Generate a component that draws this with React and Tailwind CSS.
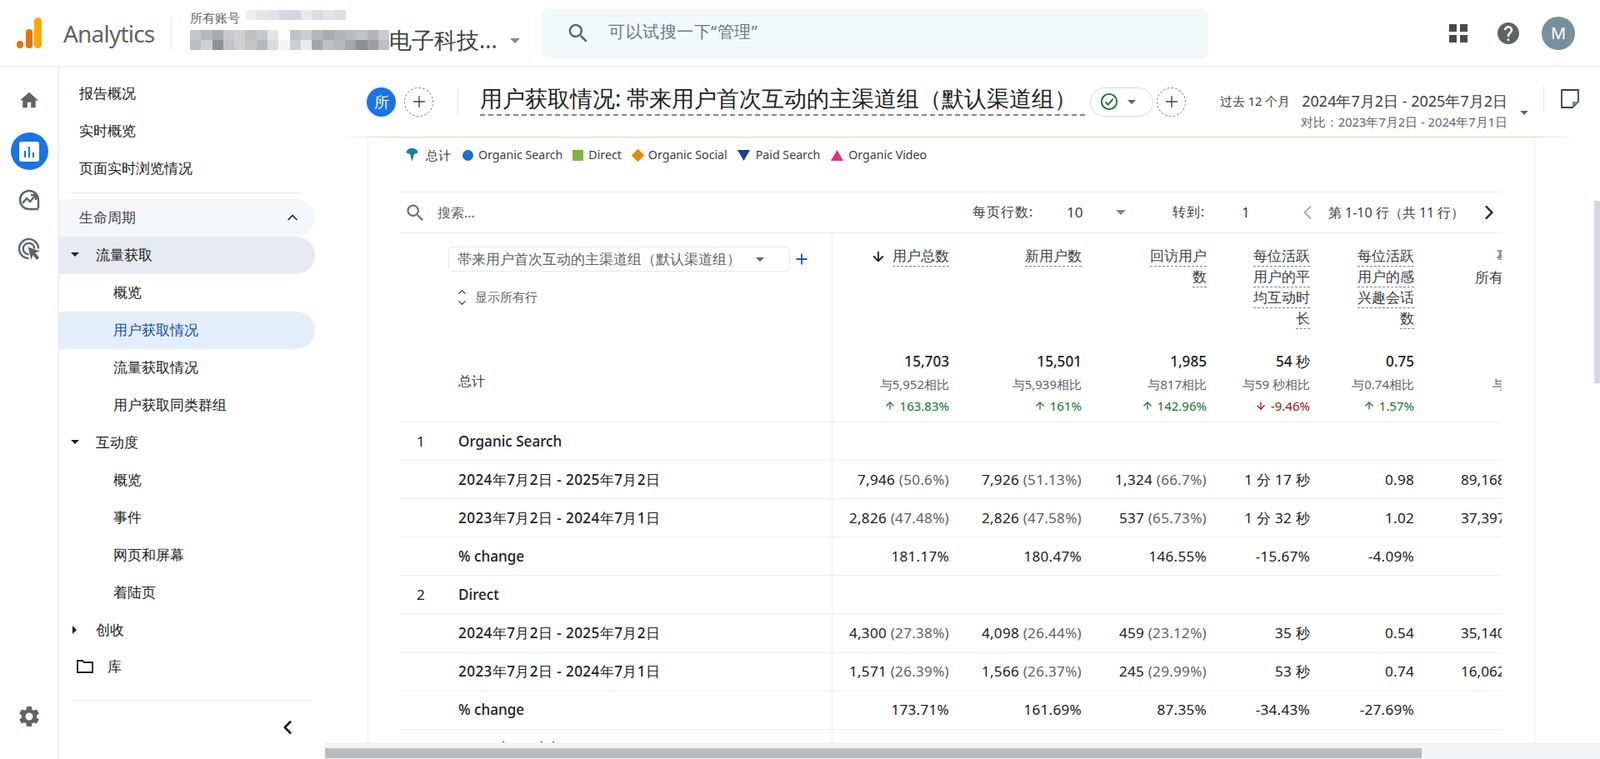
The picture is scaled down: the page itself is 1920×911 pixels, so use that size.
import React from "react";
import { ChevronLeft, ChevronRight, ChevronUp, ChevronDown, ArrowDown, ArrowUp, Plus } from "lucide-react";

const SearchI = ({ className }) => (
  <svg viewBox="0 0 24 24" className={className} fill="currentColor"><path d="M15.5 14h-.79l-.28-.27C15.41 12.59 16 11.11 16 9.5 16 5.91 13.09 3 9.5 3S3 5.91 3 9.5 5.91 16 9.5 16c1.61 0 3.09-.59 4.23-1.57l.27.28v.79l5 4.99L20.49 19l-4.99-5zm-6 0C7.01 14 5 11.99 5 9.5S7.01 5 9.5 5 14 7.01 14 9.5 11.99 14 9.5 14z" /></svg>
);
const Caret = ({ className = "" }) => (
  <span className={"w-0 h-0 border-x-[6px] border-x-transparent border-t-[6px] " + className} />
);

const mosaicA = ["#eceef1","#e4e6ea","#dfe2e6","#d4d8de","#d2d6dc","#e6e8eb","#d9dde2","#e2e4e8","#dcdfe3"];
const mosaicB = ["#c4c6c9","#b6b8bb","#a9abae","#c9cacc","#cfd0d1","#bfc1c3","#c6c8ca","#e3e4e6","#fdfdfd","#c1c5ca","#c9ced3","#b3b6ba","#a9acaf","#b1b4b7","#b8babd","#c0c2c5","#b4b6b9","#c8cacd"];
const mosaicC = ["#bcbec1","#cfd1d3","#8f9194","#c1c3c6","#cdd0d2","#c3c5c8","#b5b7ba","#d8dadc","#f4f4f5","#ccd0d4","#e8eaec","#a3a6a9","#bdbfc2","#b7b9bc","#a4a6a9","#8d8f92","#9da0a3","#bcbec1"];
const Mosaic = ({ colors }) => (
  <div className="flex">{colors.map((c, i) => <div key={i} className="w-[13.3px] h-[12px]" style={{ backgroundColor: c }} />)}</div>
);

function Header() {
  return (
    <div className="h-[80px] flex items-center border-b border-[#e8eaed] shrink-0">
      <div className="ml-[20px] flex items-end gap-[2px] h-[37px] w-[30px] shrink-0">
        <span className="w-[8px] h-[9px] rounded-full bg-[#e37400]" />
        <span className="ml-[1px] w-[9px] h-[23px] rounded-full bg-[#e8710a]" />
        <span className="w-[9px] h-[37px] rounded-full bg-[#f9ab00]" />
      </div>
      <span className="ml-[26px] w-[129px] text-[28px] text-[#5f6368] font-['Open_Sans',sans-serif] tracking-[-0.8px]">Analytics</span>
      <div className="w-px h-[40px] bg-[#e8eaed]" />
      <div className="ml-[22px] w-[422px] h-[60px] flex flex-col">
        <div className="flex items-center h-[24px]">
          <span className="text-[15px] text-[#5f6368] w-[67px]">所有账号</span>
          <div className="-mt-[8px]"><Mosaic colors={mosaicA} /></div>
        </div>
        <div className="flex items-center h-[36px] -mt-[4px]">
          <div className="flex flex-col w-[239px] overflow-hidden shrink-0">
            <Mosaic colors={mosaicB} />
            <Mosaic colors={mosaicC} />
          </div>
          <span className="text-[27px] text-[#3c4043] leading-[36px]">电子科技...</span>
          <Caret className="ml-[15px] mt-[3px] border-t-[#80868b]" />
        </div>
      </div>
      <div className="w-[800px] h-[60px] rounded-[8px] bg-[#f2f9fb] flex items-center pl-[29px]">
        <SearchI className="w-[30px] h-[30px] text-[#5f6368]" />
        <span className="ml-[21px] pb-[3px] text-[20px] tracking-[0.5px] text-[#70757a]">可以试搜一下“管理”</span>
      </div>
      <svg viewBox="0 0 22 24" className="ml-[289px] w-[22px] h-[24px] text-[#4a4a4d]" fill="currentColor">
        <rect x="0" y="1" width="9" height="9" /><rect x="13" y="1" width="9" height="9" /><rect x="0" y="14" width="9" height="9" /><rect x="13" y="14" width="9" height="9" />
      </svg>
      <svg viewBox="2 2 20 20" className="ml-[36px] w-[26px] h-[26px] text-[#5f6368]" fill="currentColor"><path d="M12 2C6.48 2 2 6.48 2 12s4.48 10 10 10 10-4.48 10-10S17.52 2 12 2zm1 17h-2v-2h2v2zm2.07-7.75l-.9.92C13.45 12.9 13 13.5 13 15h-2v-.5c0-1.1.45-2.1 1.17-2.83l1.24-1.26c.37-.36.59-.86.59-1.41 0-1.1-.9-2-2-2s-2 .9-2 2H8c0-2.21 1.79-4 4-4s4 1.79 4 4c0 .88-.36 1.68-.93 2.25z" /></svg>
      <div className="ml-[27px] w-[40px] h-[40px] rounded-full bg-[#78909c] text-white flex items-center justify-center text-[20px]">M</div>
    </div>
  );
}

function Rail() {
  return (
    <div className="w-[71px] shrink-0 border-r border-[#e3e5e8] flex flex-col items-center relative">
      <svg viewBox="2 3 20 17" className="mt-[29px] w-[22px] h-[22px] text-[#5f6368]" fill="currentColor"><path d="M10 20v-6h4v6h5v-8h3L12 3 2 12h3v8z" /></svg>
      <div className="mt-[28px] w-[45px] h-[45px] rounded-full bg-[#1a73e8] flex items-center justify-center">
        <svg viewBox="0 0 24 24" className="w-[24px] h-[24px]">
          <rect x="0" y="0" width="24" height="24" rx="3" fill="#fff" />
          <rect x="6" y="11" width="2" height="8" fill="#1a73e8" /><rect x="11" y="6" width="2" height="13" fill="#1a73e8" /><rect x="16" y="13" width="2" height="6" fill="#1a73e8" />
        </svg>
      </div>
      <svg viewBox="0 0 26 26" className="mt-[23px] w-[26px] h-[26px] text-[#5f6368]" fill="none" stroke="currentColor" strokeWidth="2.4">
        <path d="M24 23V13A11 11 0 1 0 13 24h11" />
        <path d="M5 17l5-6 4 4 6-7" /><path d="M15 7h6v6" />
      </svg>
      <svg viewBox="0 0 28 28" className="mt-[33px] w-[27px] h-[27px] text-[#5f6368]" fill="none" stroke="currentColor" strokeWidth="2.4">
        <path d="M13 25A12 12 0 1 1 25 13" /><path d="M13 20a7 7 0 1 1 7-7" />
        <path d="M12 11l15 5-6 2 5 6-3 3-5-6-2 6z" fill="currentColor" stroke="none" />
      </svg>
      <svg viewBox="0 0 24 24" className="absolute top-[765px] left-[20px] w-[30px] h-[30px] text-[#5f6368]" fill="currentColor"><path d="M19.14,12.94c0.04-0.3,0.06-0.61,0.06-0.94c0-0.32-0.02-0.64-0.07-0.94l2.03-1.58c0.18-0.14,0.23-0.41,0.12-0.61 l-1.92-3.32c-0.12-0.22-0.37-0.29-0.59-0.22l-2.39,0.96c-0.5-0.38-1.03-0.7-1.62-0.94L14.4,2.81c-0.04-0.24-0.24-0.41-0.48-0.41 h-3.84c-0.24,0-0.43,0.17-0.47,0.41L9.25,5.35C8.66,5.59,8.12,5.92,7.63,6.29L5.24,5.33c-0.22-0.08-0.47,0-0.59,0.22L2.74,8.87 C2.62,9.08,2.66,9.34,2.86,9.48l2.03,1.58C4.84,11.36,4.8,11.69,4.8,12s0.02,0.64,0.07,0.94l-2.03,1.58 c-0.18,0.14-0.23,0.41-0.12,0.61l1.92,3.32c0.12,0.22,0.37,0.29,0.59,0.22l2.39-0.96c0.5,0.38,1.03,0.7,1.62,0.94l0.36,2.54 c0.05,0.24,0.24,0.41,0.48,0.41h3.84c0.24,0,0.44-0.17,0.47-0.41l0.36-2.54c0.59-0.24,1.13-0.56,1.62-0.94l2.39,0.96 c0.22,0.08,0.47,0,0.59-0.22l1.92-3.32c0.12-0.22,0.07-0.47-0.12-0.61L19.14,12.94z M12,15.6c-1.98,0-3.6-1.62-3.6-3.6 s1.62-3.6,3.6-3.6s3.6,1.62,3.6,3.6S13.98,15.6,12,15.6z" /></svg>
    </div>
  );
}

const Item = ({ children, pl = "pl-[24px]", cls = "" }) => (
  <div className={"h-[45px] flex items-center pb-[2px] text-[17.14px] text-[#202124] " + pl + " " + cls}>{children}</div>
);
const Group = ({ children, open = true, cls = "" }) => (
  <div className={"h-[45px] flex items-center pl-[14px] pb-[2px] text-[17.14px] text-[#202124] " + cls}>
    {open ? <Caret className="border-t-[#202124] !border-x-[5px] !border-t-[5px]" /> : <span className="w-0 h-0 ml-[2px] border-y-[5px] border-y-transparent border-l-[5px] border-l-[#202124]" />}
    <span className={open ? "ml-[20px]" : "ml-[23px]"}>{children}</span>
  </div>
);

function Sidebar() {
  return (
    <div className="w-[307px] shrink-0 pt-[10px] flex flex-col">
      <Item>报告概况</Item>
      <Item>实时概览</Item>
      <Item>页面实时浏览情况</Item>
      <div className="mt-[6px] ml-[14px] mr-[16px] border-t border-[#e8eaed]" />
      <div className="mt-[7px] h-[45px] flex items-center pb-[2px] pl-[24px] pr-[17px] justify-between text-[17.14px] text-[#3c4043] bg-[#f4f6fa] rounded-r-full">
        生命周期<ChevronUp size={20} className="text-[#202124]" />
      </div>
      <Group cls="bg-[#e7eaf0] rounded-r-full">流量获取</Group>
      <Item pl="pl-[65px]">概览</Item>
      <Item pl="pl-[65px]" cls="!text-[#174ea6] bg-[#e3eefb] rounded-r-full">用户获取情况</Item>
      <Item pl="pl-[65px]">流量获取情况</Item>
      <Item pl="pl-[65px]">用户获取同类群组</Item>
      <Group>互动度</Group>
      <Item pl="pl-[65px]">概览</Item>
      <Item pl="pl-[65px]">事件</Item>
      <Item pl="pl-[65px]">网页和屏幕</Item>
      <Item pl="pl-[65px]">着陆页</Item>
      <Group open={false}>创收</Group>
      <div className="h-[41px] flex items-center pl-[21px] text-[17.14px] text-[#202124]">
        <svg viewBox="0 0 20 17" className="w-[20px] h-[17px]" fill="none" stroke="#202124" strokeWidth="1.8"><path d="M1 16V2h6l2 2h10v12z" /></svg>
        <span className="ml-[17px]">库</span>
      </div>
      <div className="mt-[20px] ml-[15px] mr-[3px] border-t border-[#e8eaed]" />
      <div className="h-[66px] flex justify-end items-center pr-[20px]"><ChevronLeft size={26} strokeWidth={2.6} className="text-[#202124] -mt-[3px]" /></div>
    </div>
  );
}

function TitleBar() {
  return (
    <div className="shrink-0">
      <div className="h-[84px] pl-[62px] flex items-center">
        <div className="w-[35px] h-[35px] shrink-0 rounded-full bg-[#1a73e8] text-white flex items-center justify-center text-[18px]">所</div>
        <div className="ml-[10px] w-[35px] h-[35px] shrink-0 rounded-full border border-dashed border-[#80868b] flex items-center justify-center"><Plus size={22} strokeWidth={1.5} className="text-[#3c4043]" /></div>
        <div className="ml-[29px] w-px h-[30px] shrink-0 bg-[#e8eaed]" />
        <div className="ml-[26px] mb-[2px] w-[726px] shrink-0 text-[27px] leading-[28px] pb-[5px] text-[#202124] whitespace-nowrap border-b-2 border-dashed border-[#80868b]">用户获取情况: 帯来用户首次互动的主渠道组（默认渠道组）</div>
        <div className="ml-[6px] w-[76px] h-[35px] shrink-0 rounded-full border border-[#dadce0] flex items-center pl-[11px]">
          <svg viewBox="0 0 24 24" className="w-[22px] h-[22px]" fill="none" stroke="#137333" strokeWidth="2"><circle cx="12" cy="12" r="10" /><path d="M7 12.5l3.5 3.5L17 8.500" /></svg>
          <Caret className="ml-[11px] border-t-[#5f6368] !border-x-[5px] !border-t-[5px]" />
        </div>
        <div className="ml-[4px] w-[35px] h-[35px] shrink-0 rounded-full border border-dashed border-[#80868b] flex items-center justify-center"><Plus size={22} strokeWidth={1.5} className="text-[#3c4043]" /></div>
        <div className="ml-[42px] mt-[22px] w-[344px] shrink-0 flex flex-col items-end whitespace-nowrap">
          <div className="flex items-center h-[26px]">
            <span className="text-[14.7px] text-[#3c4043]">过去 12 个月</span>
            <span className="ml-[14px] text-[18px] text-[#3c4043]">2024年7月2日 - 2025年7月2日</span>
          </div>
          <div className="text-[14.7px] h-[24px] leading-[24px] text-[#5f6368]">对比：2023年7月2日 - 2024年7月1日</div>
        </div>
        <Caret className="ml-[15px] mt-[26px] shrink-0 border-t-[#5f6368] !border-x-[5px] !border-t-[5px]" />
        <div className="ml-[18px] w-px h-[30px] shrink-0 bg-[#e8eaed] -mt-[6px]" />
        <svg viewBox="0 0 22 23" className="ml-[20px] w-[22px] h-[23px] shrink-0 -mt-[8px]" fill="none" stroke="#3c4043" strokeWidth="1.8"><path d="M1 1h20v14l-7 7H1z" /><path d="M21 15h-7v7z" fill="#80868b" stroke="none" /></svg>
      </div>
      <div className="h-px mr-[30px] ml-[30px] bg-[linear-gradient(to_right,transparent,#d4d4ce_4%,#d4d4ce_97%,transparent)]" />
    </div>
  );
}

const LegendText = ({ children, cls = "" }) => <span className={"text-[14.2px] text-[#3c4043] " + cls}>{children}</span>;

function Legend() {
  return (
    <div className="h-[65px] pt-[8px] pl-[45px] flex items-start">
      <div className="flex items-center h-[26px]">
        <svg viewBox="0 0 14 16" className="w-[15px] h-[16px]"><path d="M0 5a7 5 0 0 1 14 0c0 1-3 1-4.500 2L7 16 4.500 7C3 6 0 6 0 5z" fill="#12829e" /></svg>
        <span className="ml-[9px] text-[14.7px] text-[#3c4043]">总计</span>
        <span className="ml-[14px] w-[13px] h-[13px] rounded-full bg-[#1a6ed8]" />
        <LegendText cls="ml-[6px]">Organic Search</LegendText>
        <span className="ml-[12px] w-[13px] h-[13px] bg-[#7cb342]" />
        <LegendText cls="ml-[6px]">Direct</LegendText>
        <span className="ml-[14px] w-[11px] h-[11px] rotate-45 bg-[#e58a00]" />
        <LegendText cls="ml-[7px]">Organic Social</LegendText>
        <svg viewBox="0 0 15 13" className="ml-[12px] w-[15px] h-[13px]"><path d="M0 0h15L7.500 13z" fill="#1f3a93" /></svg>
        <LegendText cls="ml-[7px]">Paid Search</LegendText>
        <svg viewBox="0 0 15 13" className="ml-[13px] w-[15px] h-[13px]"><path d="M0 13h15L7.500 0z" fill="#e52b8c" /></svg>
        <LegendText cls="ml-[6px]">Organic Video</LegendText>
      </div>
    </div>
  );
}

function SearchRow() {
  return (
    <div className="h-[50px] flex items-center border-y border-[#eeeeee] text-[#5f6368]">
      <SearchI className="ml-[5px] w-[27px] h-[27px] text-[#70757a]" />
      <span className="ml-[13px] text-[16px]">搜索...</span>
      <span className="ml-[597px] text-[15.5px] tracking-[1px] text-[#3c4043] w-[113px]">每页行数:</span>
      <span className="text-[17.14px] text-[#3c4043] w-[59px]">10</span>
      <Caret className="border-t-[#80868b]" />
      <span className="ml-[56px] text-[15.5px] tracking-[1px] text-[#3c4043] w-[83px]">转到:</span>
      <span className="text-[17.14px] text-[#3c4043] w-[65px]">1</span>
      <ChevronLeft size={28} strokeWidth={1.5} className="text-[#9aa0a6]" />
      <span className="ml-[11px] text-[16px] text-[#3c4043] w-[179px] whitespace-nowrap">第 1-10 行（共 11 行）</span>
      <ChevronRight size={28} strokeWidth={2} className="text-[#202124]" />
    </div>
  );
}

const W = ["w-[140px]", "w-[159px]", "w-[150px]", "w-[124px]", "w-[125px]"];
const HeaderCol = ({ i, lines, arrow }) => (
  <div className={W[i] + " shrink-0 flex flex-col items-end"}>
    {lines.map((l, k) => (
      <div key={k} className="flex items-center h-[25px]">
        {arrow && <ArrowDown size={18} strokeWidth={2.4} className="mr-[8px] text-[#202124]" />}
        <span className="h-[25px] leading-[24px] text-[17.3px] text-[#3c4043] border-b border-dashed border-[#80868b]">{l}</span>
      </div>
    ))}
  </div>
);
const TotalCol = ({ i, a, b, c, up = true }) => (
  <div className={W[i] + " shrink-0 flex flex-col items-end"}>
    <div className="h-[26px] leading-[26px] text-[17.14px] font-medium text-[#202124]">{a}</div>
    <div className="h-[28px] leading-[28px] text-[15px] text-[#5f6368]">{b}</div>
    <div className={"h-[24px] text-[15px] flex items-center gap-[5px] " + (up ? "text-[#137333]" : "text-[#a50e0e]")}>
      {up ? <ArrowUp size={14} strokeWidth={2.2} /> : <ArrowDown size={14} strokeWidth={2.2} />}{c}
    </div>
  </div>
);

function TableHead() {
  return (
    <>
      <div className="flex h-[141px]">
        <div className="w-[519px] shrink-0 border-r border-[#eeeeee] pl-[58px] pt-[16px]">
          <div className="flex items-center">
            <div className="w-[410px] h-[30px] border border-[#e8e8e8] rounded-[5px] flex items-center pl-[10px] text-[17.3px] text-[#5f6368] whitespace-nowrap">
              帯来用户首次互动的主渠道组（默认渠道组）
              <Caret className="ml-[18px] border-t-[#5f6368] !border-x-[5px] !border-t-[5px]" />
            </div>
            <Plus size={20} strokeWidth={2.2} className="ml-[4px] text-[#185abc]" />
          </div>
          <div className="mt-[17px] ml-[9px] flex items-center text-[14.5px] text-[#5f6368]">
            <span className="flex flex-col w-[14px] mr-[9px] text-[#3c4043]"><ChevronUp size={15} strokeWidth={2} className="-mb-[2px]" /><ChevronDown size={15} strokeWidth={2} /></span>
            显示所有行
          </div>
        </div>
        <div className="flex pt-[15px] overflow-hidden">
          <HeaderCol i={0} lines={["用户总数"]} arrow />
          <HeaderCol i={1} lines={["新用户数"]} />
          <HeaderCol i={2} lines={["回访用户", "数"]} />
          <HeaderCol i={3} lines={["每位活跃", "用户的平", "均互动时", "长"]} />
          <HeaderCol i={4} lines={["每位活跃", "用户的感", "兴趣会话", "数"]} />
          <div className="w-[106px] text-[17.14px] text-[#3c4043] whitespace-nowrap overflow-hidden">
            <div className="h-[25px] leading-[24px] pl-[99px]">事件数</div>
            <div className="leading-[25px] pl-[73px]">所有事件</div>
          </div>
        </div>
      </div>
      <div className="flex h-[86px] border-b border-[#eeeeee]">
        <div className="w-[519px] shrink-0 border-r border-[#eeeeee] pl-[70px] flex items-center pb-[12px] text-[15.5px] text-[#3c4043]">总计</div>
        <TotalCol i={0} a="15,703" b="与5,952相比" c="163.83%" />
        <TotalCol i={1} a="15,501" b="与5,939相比" c="161%" />
        <TotalCol i={2} a="1,985" b="与817相比" c="142.96%" />
        <TotalCol i={3} a="54 秒" b="与59 秒相比" c="-9.46%" up={false} />
        <TotalCol i={4} a="0.75" b="与0.74相比" c="1.57%" />
        <div className="w-[106px] overflow-hidden whitespace-nowrap pl-[94px] pt-[26px] leading-[28px] text-[15px] text-[#5f6368]">与238,462相比</div>
      </div>
    </>
  );
}

const Cell = ({ i, v }) => {
  const [n, p] = v.split("|");
  return (
    <div className={W[i] + " shrink-0 text-right whitespace-nowrap tracking-[0.25px]"}>
      {n}{p && <span className="text-[#5f6368]"> {p}</span>}
    </div>
  );
};
const Row = ({ idx, label, vals = [], last, date }) => (
  <div className="flex h-[46.1px] border-b border-[#eeeeee] items-center text-[17.14px] text-[#202124]">
    <div className="w-[519px] shrink-0 self-stretch border-r border-[#eeeeee] flex items-center">
      <span className="w-[70px] pl-[20px]">{idx}</span>
      <span className={"font-medium " + (date ? "tracking-[0.4px]" : "")}>{label}</span>
    </div>
    {vals.map((v, i) => <Cell key={i} i={i} v={v} />)}
    {last && <div className="w-[106px] overflow-hidden whitespace-nowrap pl-[56px]">{last}</div>}
  </div>
);

function Table() {
  return (
    <div className="ml-[38px] w-[1322px]">
      <SearchRow />
      <TableHead />
      <Row idx="1" label="Organic Search" />
      <Row label="2024年7月2日 - 2025年7月2日" date vals={["7,946|(50.6%)", "7,926|(51.13%)", "1,324|(66.7%)", "1 分 17 秒", "0.98"]} last="89,168" />
      <Row label="2023年7月2日 - 2024年7月1日" date vals={["2,826|(47.48%)", "2,826|(47.58%)", "537|(65.73%)", "1 分 32 秒", "1.02"]} last="37,397" />
      <Row label="% change" vals={["181.17%", "180.47%", "146.55%", "-15.67%", "-4.09%"]} />
      <Row idx="2" label="Direct" />
      <Row label="2024年7月2日 - 2025年7月2日" date vals={["4,300|(27.38%)", "4,098|(26.44%)", "459|(23.12%)", "35 秒", "0.54"]} last="35,140" />
      <Row label="2023年7月2日 - 2024年7月1日" date vals={["1,571|(26.39%)", "1,566|(26.37%)", "245|(29.99%)", "53 秒", "0.74"]} last="16,062" />
      <Row label="% change" vals={["173.71%", "161.69%", "87.35%", "-34.43%", "-27.69%"]} />
      <Row idx="3" label="Organic Social" />
    </div>
  );
}

export default function App() {
  return (
    <div className="w-[1920px] h-[911px] overflow-hidden relative bg-white flex flex-col font-['Roboto','Noto_Sans_CJK_SC',sans-serif]">
      <Header />
      <div className="flex flex-1 min-h-0">
        <Rail />
        <Sidebar />
        <div className="flex-1 min-w-0 flex flex-col">
          <TitleBar />
          <div className="ml-[63px] w-[1401px] flex-1 min-h-0 border-x border-[#eeeeee] overflow-hidden">
            <Legend />
            <Table />
          </div>
        </div>
      </div>
      <div className="absolute left-[390px] right-0 bottom-0 h-[20px] bg-[#f1f3f4]">
        <div className="absolute left-0 top-[7px] w-[1316px] h-[12px] bg-[#b9bcbf]" />
      </div>
      <div className="absolute right-0 top-[241px] w-[7px] h-[219px] bg-[#d3d7dd] rounded-t-[2px]" />
    </div>
  );
}
